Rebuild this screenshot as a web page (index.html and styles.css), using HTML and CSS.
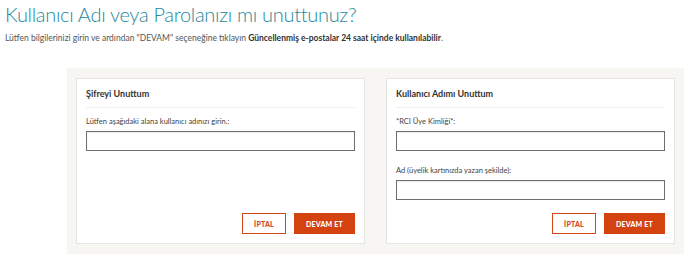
FILE: index.html
```html
<!DOCTYPE html>
<html lang="tr">

<head>
    <meta charset="UTF-8">
    <meta name="viewport" content="width=device-width, initial-scale=1">
    <title>Kullanıcı Adı veya Parolanızı mı unuttunuz?</title>
    <link rel="stylesheet" href="styles.css">
</head>

<body>
    <!-- page heading -->
    <h1 class="page-title">Kullanıcı Adı veya Parolanızı mı unuttunuz?</h1>
    <p class="intro">
        Lütfen bilgilerinizi girin ve ardından "DEVAM" seçeneğine tıklayın
        <strong>Güncellenmiş e-postalar 24 saat içinde kullanılabilir</strong>.
    </p>

    <!-- forms container -->
    <div class="forms">
        <!-- forgot password -->
        <form class="panel">
            <div class="panel-head">Şifreyi Unuttum</div>
            <div class="panel-body">
                <label class="field">
                    <span class="field-label">Lütfen aşağıdaki alana kullanıcı adınızı girin.:</span>
                    <input type="text" class="field-input">
                </label>
                <div class="actions">
                    <button type="button" class="btn btn-cancel">İPTAL</button>
                    <button type="submit" class="btn btn-go">DEVAM ET</button>
                </div>
            </div>
        </form>

        <!-- forgot username -->
        <form class="panel">
            <div class="panel-head">Kullanıcı Adımı Unuttum</div>
            <div class="panel-body">
                <label class="field">
                    <span class="field-label">*RCI Üye Kimliği*:</span>
                    <input type="text" class="field-input">
                </label>
                <label class="field">
                    <span class="field-label">Ad (üyelik kartınızda yazan şekilde):</span>
                    <input type="text" class="field-input">
                </label>
                <div class="actions">
                    <button type="button" class="btn btn-cancel">İPTAL</button>
                    <button type="submit" class="btn btn-go">DEVAM ET</button>
                </div>
            </div>
        </form>
    </div>
</body>

</html>
```

FILE: styles.css
```css
body {
    margin: 0px;
    padding: 0 5px;
    background-color: #ffffff;
}

* {
    box-sizing: border-box;
    font-family: Lato, "Open Sans", sans-serif;
}

.page-title {
    margin: 0;
    padding-top: 2px;
    font-size: 20px;
    line-height: 25px;
    font-weight: 300;
    letter-spacing: -0.3px;
    color: #24899c;
}

.intro {
    margin: 6px 0 0;
    font-size: 8.5px;
    line-height: 10px;
    color: #555555;
}

.intro strong {
    color: #333333;
    font-weight: 700;
}

.forms {
    display: grid;
    grid-template-columns: 1fr 1fr;
    gap: 21px;
    width: 617px;
    margin-top: 25px;
    margin-left: 62px;
    padding: 10px 9px;
    background-color: #f7f6f2;
}

.panel {
    display: flex;
    flex-direction: column;
    margin: 0;
    background-color: white;
    border: 1px solid #e6e5e2;
}

.panel-head {
    margin: 0 9px;
    padding: 9px 0 8px;
    font-size: 9px;
    line-height: 11px;
    font-weight: 700;
    color: #333333;
    border-bottom: 1px solid #eeeeee;
}

.panel-body {
    flex: 1;
    display: flex;
    flex-direction: column;
    padding: 0 9px 9px;
}

.field {
    display: flex;
    flex-direction: column;
    margin-top: 9px;
}

.field + .field {
    margin-top: 15px;
}

.field-label {
    font-size: 7.5px;
    line-height: 10px;
    color: #444444;
    margin-bottom: 4px;
}

.field-input {
    height: 20px;
    margin: 0;
    border: 1px solid #6e6e6e;
    background-color: white;
    box-shadow: inset 0 1px 1px rgba(0, 0, 0, 0.08);
}

.actions {
    display: flex;
    justify-content: flex-end;
    gap: 8px;
    margin-top: auto;
    padding-top: 13px;
}

.btn {
    height: 21px;
    padding: 0;
    font-size: 7px;
    font-weight: 900;
    letter-spacing: 0.2px;
    cursor: pointer;
}

.btn-cancel {
    width: 44px;
    background-color: white;
    color: #d4451a;
    border: 1px solid #d4451a;
}

.btn-go {
    width: 61px;
    background-color: #d3420f;
    color: white;
    border: 1px solid #d3420f;
}
```
